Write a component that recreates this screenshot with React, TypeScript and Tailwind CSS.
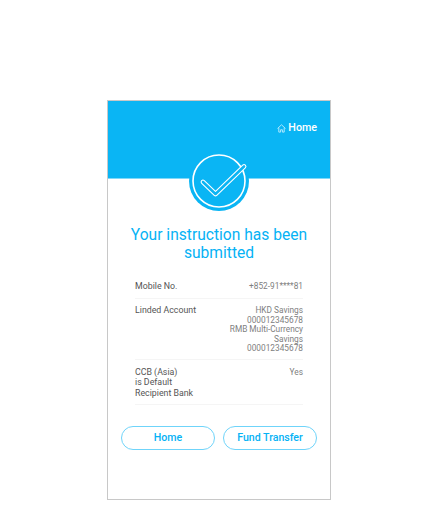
export default function App() {
  return (
    <div className="w-[438px] h-[510px] bg-white pt-[100px] pl-[107px] font-['Roboto',sans-serif]">
      <div className="relative w-[224px] h-[400px] border border-[#c8c8c8] bg-white">
        <div className="h-[78px] bg-[#0ab5f4] flex justify-end items-start pt-[20px] pr-[13px] border-b border-[#7fd8f9]">
          <div className="flex items-center gap-[2px] text-white text-[10.7px] leading-[14px] font-medium">
            <svg width="9" height="9" viewBox="0 0 10 10" fill="none" stroke="#bfeeff" strokeWidth="1">
              <path d="M0.6 5 L5 0.9 L9.4 5 M2 4.2 V9 H4 V6.4 H6 V9 H8 V4.2" />
            </svg>
            <span>Home</span>
          </div>
        </div>
        <div className="absolute left-[81px] top-[50px] w-[60px] h-[60px] rounded-full bg-[#0ab5f4] flex items-center justify-center">
          <svg width="60" height="60" viewBox="0 0 60 60" fill="none">
            <circle cx="30" cy="30" r="26" stroke="white" strokeWidth="1.6" />
            <path d="M14 31 L26.5 43 L55 15.5" stroke="white" strokeWidth="4.8" strokeLinecap="round" strokeLinejoin="round" />
            <path d="M14 31 L26.5 43 L55 15.5" stroke="#0ab5f4" strokeWidth="2.6" strokeLinecap="round" strokeLinejoin="round" />
          </svg>
        </div>
        <div className="pt-[47px] px-[13px] flex flex-col">
          <h1 className="text-center text-[#05b2f5] text-[15.6px] leading-[18px] font-normal">Your instruction has been submitted</h1>
          <div className="mt-[14px] px-[14px]">
            <div className="flex justify-between items-start pt-[5px] pb-[7px] border-b border-[#f5f5f5] leading-[10px]">
              <span className="text-[#555555] text-[8.8px]">Mobile No.</span>
              <span className="text-[#808080] text-[8.3px]">+852-91****81</span>
            </div>
            <div className="flex justify-between items-start pt-[7px] pb-[5px] border-b border-[#f5f5f5] leading-[9.6px]">
              <span className="text-[#555555] text-[8.8px]">Linded Account</span>
              <span className="text-[#808080] text-[8.3px] text-right w-[80px]">HKD Savings<br />000012345678<br />RMB Multi-Currency Savings<br />000012345678</span>
            </div>
            <div className="flex justify-between items-start pt-[7px] pb-[6px] border-b border-[#f5f5f5] leading-[10.4px]">
              <span className="text-[#555555] text-[8.8px]">CCB (Asia)<br />is Default<br />Recipient Bank</span>
              <span className="text-[#808080] text-[8.3px]">Yes</span>
            </div>
          </div>
          <div className="mt-[21px] flex gap-[8px]">
            <button className="w-[94px] h-[24px] rounded-full border-[1.5px] border-[#6fd4fa] text-[#05b2f5] text-[10.6px] font-medium">Home</button>
            <button className="w-[94px] h-[24px] rounded-full border-[1.5px] border-[#6fd4fa] text-[#05b2f5] text-[10.6px] font-medium">Fund Transfer</button>
          </div>
        </div>
      </div>
    </div>
  );
}
